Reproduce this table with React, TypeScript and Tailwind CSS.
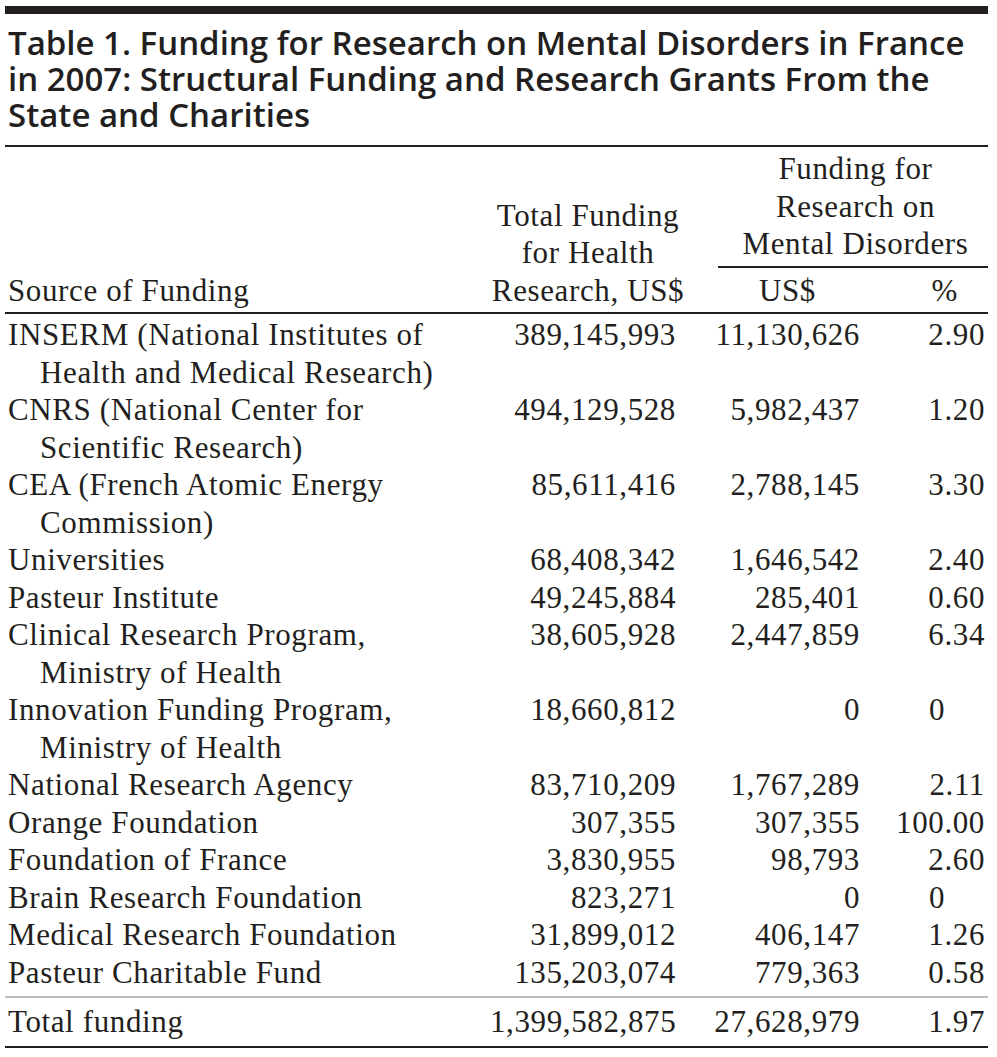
import React from 'react';

type Row = { label: string[]; total: string; usd: string; pct: string };

const rows: Row[] = [
  { label: ['INSERM (National Institutes of', 'Health and Medical Research)'], total: '389,145,993', usd: '11,130,626', pct: '2.90' },
  { label: ['CNRS (National Center for', 'Scientific Research)'], total: '494,129,528', usd: '5,982,437', pct: '1.20' },
  { label: ['CEA (French Atomic Energy', 'Commission)'], total: '85,611,416', usd: '2,788,145', pct: '3.30' },
  { label: ['Universities'], total: '68,408,342', usd: '1,646,542', pct: '2.40' },
  { label: ['Pasteur Institute'], total: '49,245,884', usd: '285,401', pct: '0.60' },
  { label: ['Clinical Research Program,', 'Ministry of Health'], total: '38,605,928', usd: '2,447,859', pct: '6.34' },
  { label: ['Innovation Funding Program,', 'Ministry of Health'], total: '18,660,812', usd: '0', pct: '0' },
  { label: ['National Research Agency'], total: '83,710,209', usd: '1,767,289', pct: '2.11' },
  { label: ['Orange Foundation'], total: '307,355', usd: '307,355', pct: '100.00' },
  { label: ['Foundation of France'], total: '3,830,955', usd: '98,793', pct: '2.60' },
  { label: ['Brain Research Foundation'], total: '823,271', usd: '0', pct: '0' },
  { label: ['Medical Research Foundation'], total: '31,899,012', usd: '406,147', pct: '1.26' },
  { label: ['Pasteur Charitable Fund'], total: '135,203,074', usd: '779,363', pct: '0.58' },
];

const cols = 'grid grid-cols-[485px_215px_160px_123px]';

const DataRow: React.FC<{ row: Row }> = ({ row }) => (
  <div className={cols}>
    <div className="pl-[3px]">
      {row.label.map((line, i) => (
        <div key={i} className={i > 0 ? 'pl-[32px]' : ''}>
          {line}
        </div>
      ))}
    </div>
    <div className="text-right pr-[29px]">{row.total}</div>
    <div className="text-right pr-[5px]">{row.usd}</div>
    {/* a bare 0 lines up with the units digit, not the decimals */}
    <div className={row.pct === '0' ? 'text-right pr-[43px]' : 'text-right pr-[3px]'}>{row.pct}</div>
  </div>
);

const App: React.FC = () => {
  return (
    <div className="min-h-screen bg-white text-[#231f20]">
      <div className="ml-[5px] w-[983px] pt-[6px]">
        {/* Title */}
        <div className="h-[8px] bg-[#231f20]"></div>
        <h1 className="pl-[3px] pt-[11px] pb-[12px] font-['Open_Sans',sans-serif] font-semibold text-[33px] leading-[36px]">
          Table 1. Funding for Research on Mental Disorders in France
          <br />
          in 2007: Structural Funding and Research Grants From the
          <br />
          State and Charities
        </h1>
        <div className="h-[2px] bg-[#231f20]"></div>

        <div className="font-['Liberation_Serif',serif] text-[31px] leading-[37.5px] tracking-[0.02em]">
          {/* Column headings */}
          <div className={`${cols} items-end pt-[3px] pb-[3px]`}>
            <div className="pl-[3px]">Source of Funding</div>
            <div className="text-center pr-[19px]">
              Total Funding
              <br />
              for Health
              <br />
              Research, US$
            </div>
            <div className="col-span-2 flex flex-col">
              <div className="text-center pl-[18px] pb-[3px]">
                Funding for
                <br />
                Research on
                <br />
                Mental Disorders
              </div>
              <div className="ml-[13px] h-[2px] bg-[#231f20]"></div>
              <div className="grid grid-cols-[147px_123px] pt-[4px]">
                <div className="text-center pl-[18px]">US$</div>
                <div className="text-right pr-[17px]">%</div>
              </div>
            </div>
          </div>
          <div className="h-[2px] bg-[#231f20]"></div>

          {/* Body */}
          <div className="pt-[2px]">
            {rows.map((row, i) => (
              <DataRow key={i} row={row} />
            ))}
          </div>
          <div className="mt-[5px] h-[1.5px] bg-[#bdbdbd]"></div>
          <div className="pt-[5px] pb-[6px]">
            <DataRow row={{ label: ['Total funding'], total: '1,399,582,875', usd: '27,628,979', pct: '1.97' }} />
          </div>
          <div className="h-[2px] bg-[#231f20]"></div>
        </div>
      </div>
    </div>
  );
};

export default App;
